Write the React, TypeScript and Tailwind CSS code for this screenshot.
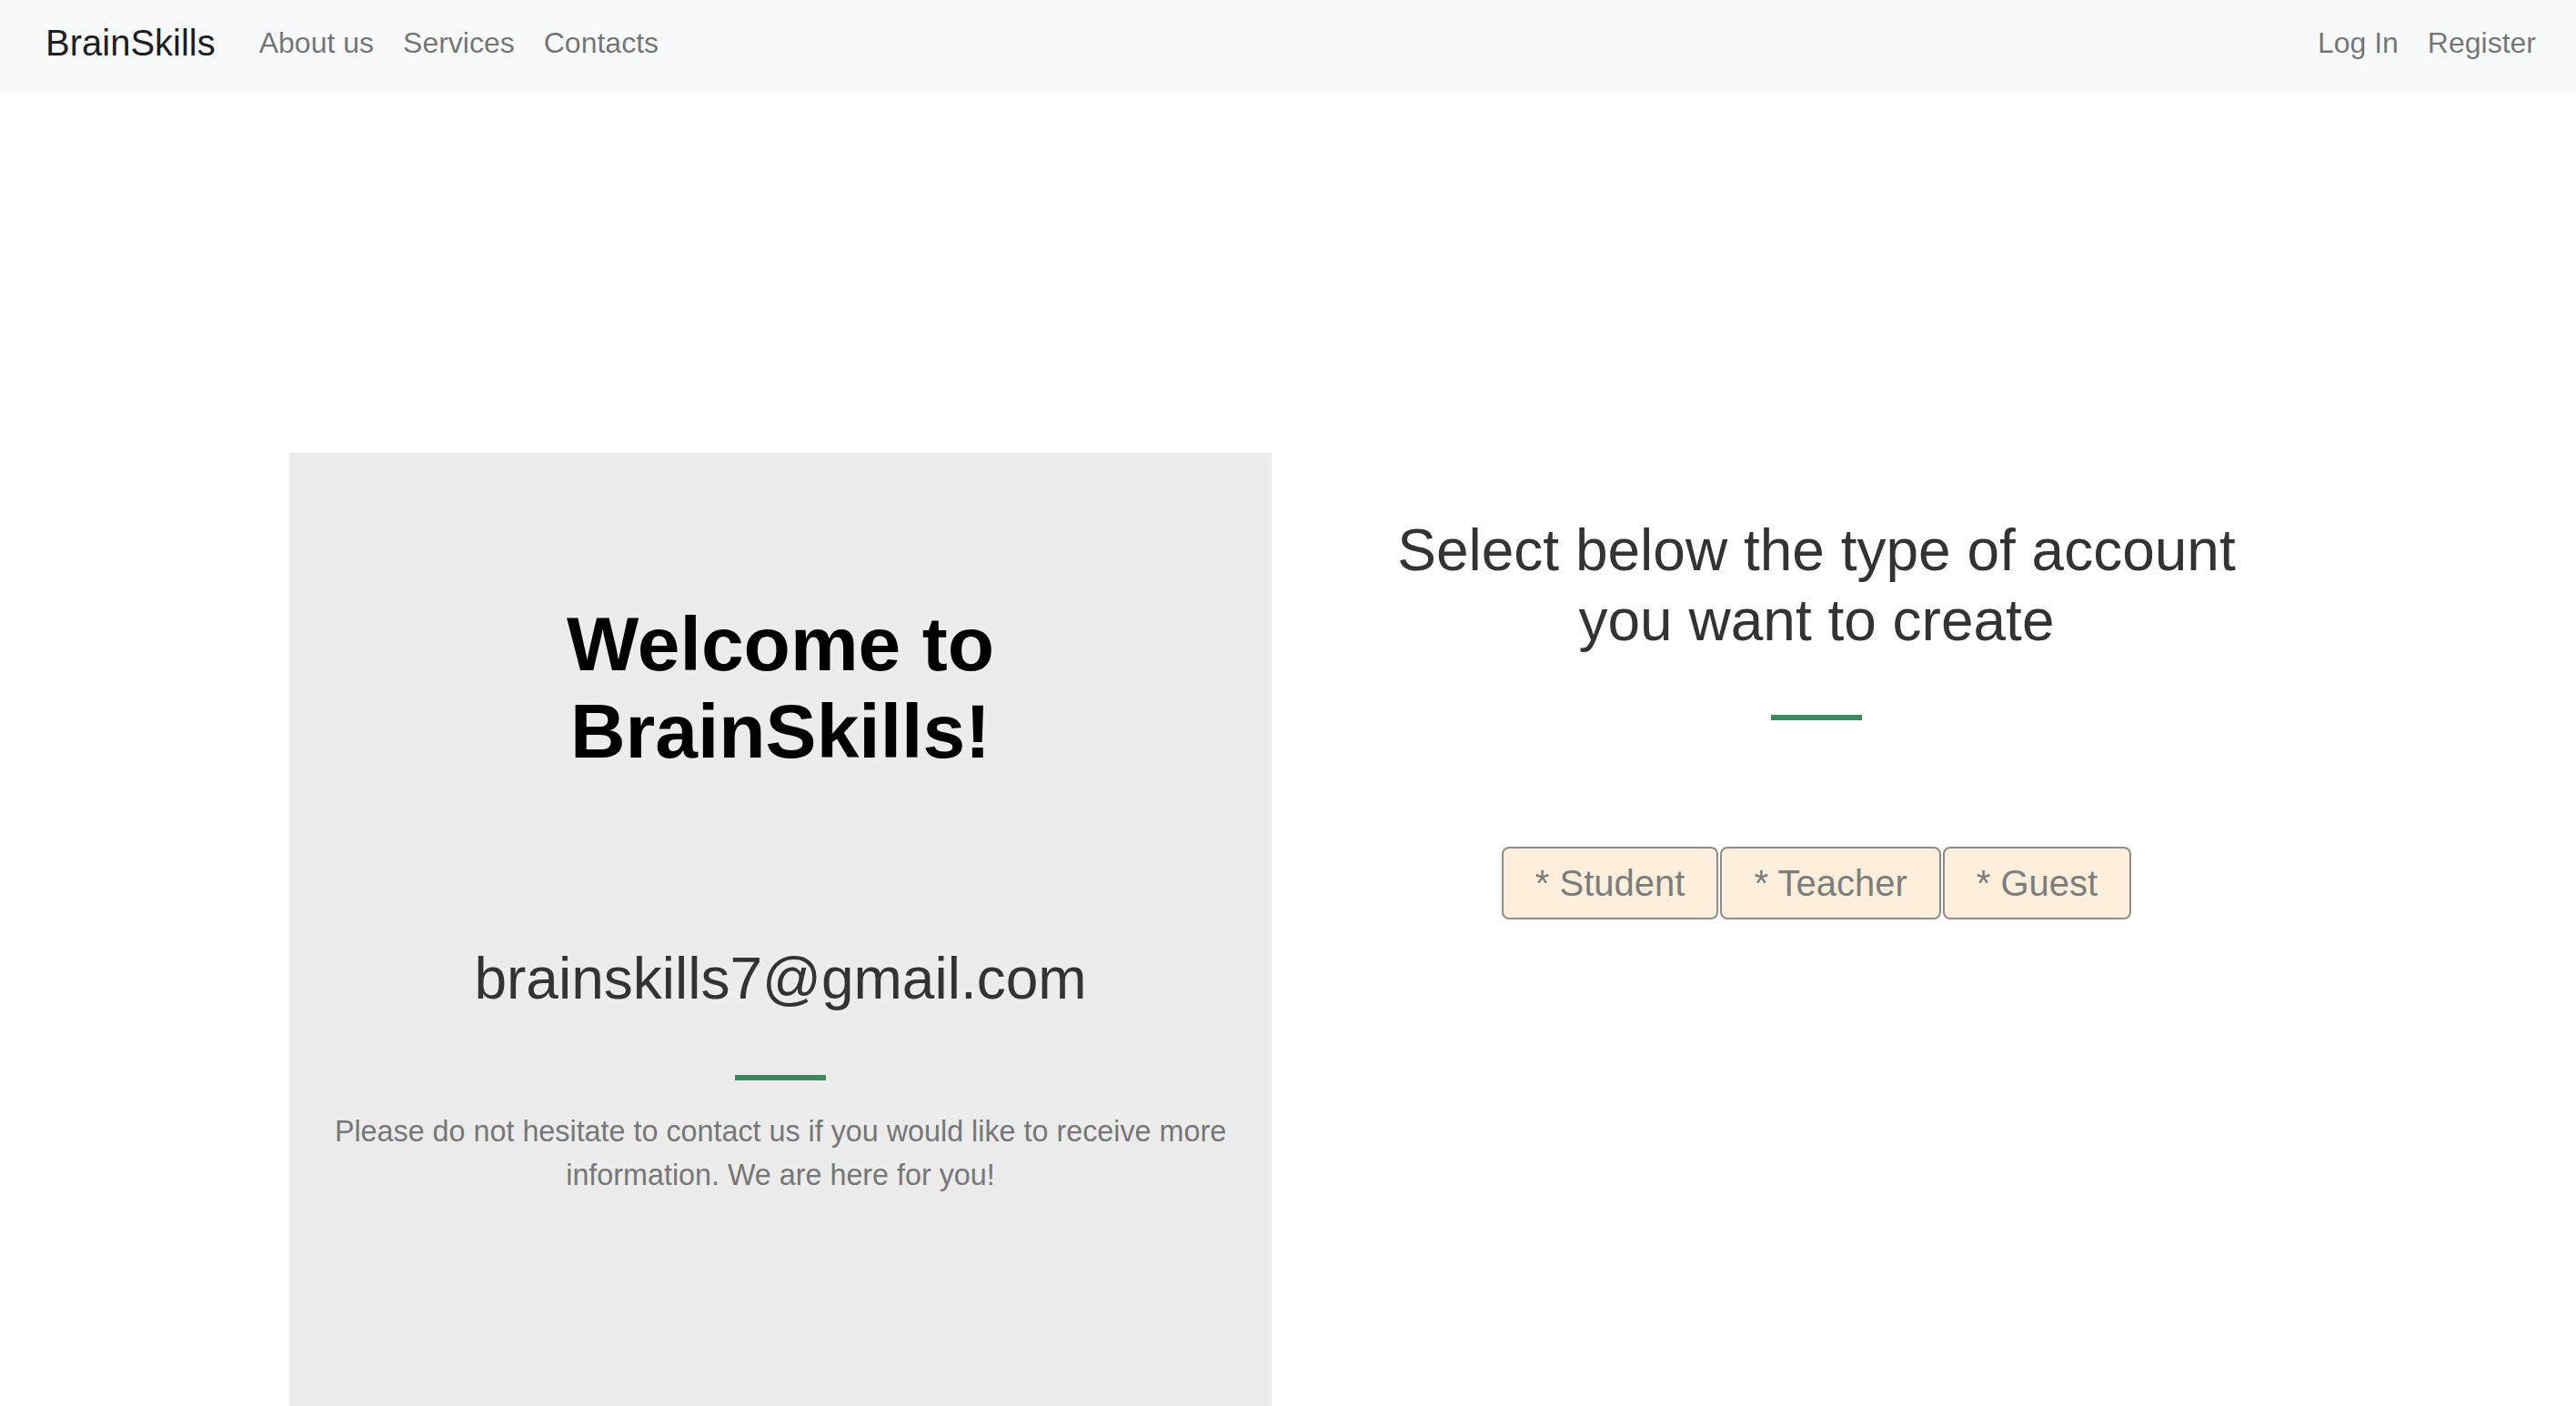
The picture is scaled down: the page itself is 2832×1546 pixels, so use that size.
const navLinks = ["About us", "Services", "Contacts"];
const accountTypes = ["Student", "Teacher", "Guest"];

function NavBar() {
  return (
    <nav className="flex h-[104px] items-center justify-between bg-[#f8f9fa] pb-[10px] pl-[50px] pr-[28px]">
      <div className="flex items-center">
        <a className="mr-[32px] text-[40px] leading-[60px] text-black/90" href="#">
          BrainSkills
        </a>
        {navLinks.map((link) => (
          <a key={link} className="px-[16px] text-[32px] leading-[48px] text-black/55" href="#">
            {link}
          </a>
        ))}
      </div>
      <div className="flex items-center">
        <a className="px-[16px] text-[32px] leading-[48px] text-black/55" href="#">
          Log In
        </a>
        <a className="px-[16px] text-[32px] leading-[48px] text-black/55" href="#">
          Register
        </a>
      </div>
    </nav>
  );
}

function ContactPanel() {
  return (
    <section className="flex h-[1100px] w-[1080px] shrink-0 flex-col items-center bg-[#ececec] px-[40px] pt-[162px] text-center">
      <h1 className="text-[84px] leading-[96px] font-bold text-black">
        Welcome to
        <br />
        BrainSkills!
      </h1>
      <h2 className="mt-[186px] text-[64px] leading-[77px] text-[#333]">brainskills7@gmail.com</h2>
      <div className="mt-[67px] h-[6px] w-[100px] bg-[#3d8a5f]" />
      <p className="mt-[32px] text-[32.3px] leading-[48px] text-[#777]">
        Please do not hesitate to contact us if you would like to receive more information. We are here
        for you!
      </p>
    </section>
  );
}

function AccountPicker() {
  return (
    <section className="flex w-[1198px] flex-col items-center pt-[69px] text-center">
      <h2 className="max-w-[960px] text-[64px] leading-[77px] text-[#333]">
        Select below the type of account you want to create
      </h2>
      <div className="mt-[65px] h-[6px] w-[100px] bg-[#3d8a5f]" />
      <div className="mt-[139px] flex gap-[2px]">
        {accountTypes.map((type) => (
          <button
            key={type}
            type="button"
            className="rounded-[8px] border-2 border-[#8c8c8c] bg-[#fdefdb] px-[35px] py-[8px] text-[40px] leading-[60px] text-[#7d7d7d]"
          >
            * {type}
          </button>
        ))}
      </div>
    </section>
  );
}

export default function App() {
  return (
    <div className="h-[1546px] overflow-hidden bg-white font-['Liberation_Sans',Arial,sans-serif]">
      <NavBar />
      <main className="mt-[394px] flex pl-[318px]">
        <ContactPanel />
        <AccountPicker />
      </main>
    </div>
  );
}
